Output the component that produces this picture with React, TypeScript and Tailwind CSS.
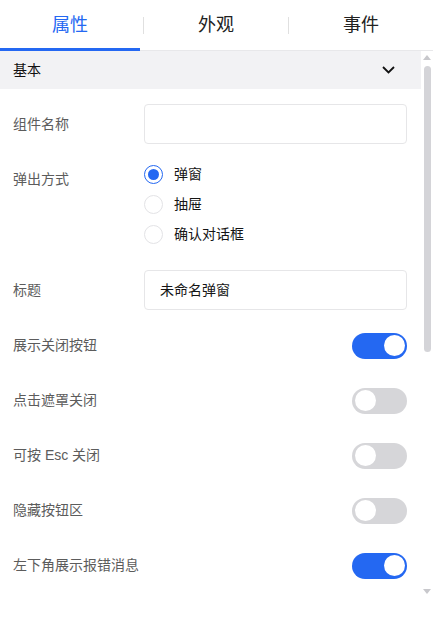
import React from 'react';

const FONT = { fontFamily: '"Liberation Sans", "Noto Sans CJK SC", sans-serif' };

const Toggle: React.FC<{ on: boolean }> = ({ on }) => (
  <div
    className={`w-[55px] h-[26px] rounded-full p-[2.5px] flex ${
      on ? 'bg-[#2468f2] justify-end' : 'bg-[#d6d6d9] justify-start'
    }`}
  >
    <div className="w-[21px] h-[21px] rounded-full bg-white" />
  </div>
);

const Radio: React.FC<{ checked?: boolean; label: string }> = ({ checked, label }) => (
  <div className="flex items-center h-[30px]">
    <div
      className={`w-[19px] h-[19px] rounded-full border flex items-center justify-center ${
        checked ? 'border-[#2468f2]' : 'border-[#e3e3e6]'
      }`}
    >
      {checked && <div className="w-[11px] h-[11px] rounded-full bg-[#2468f2]" />}
    </div>
    <span className="ml-[11px] text-[14px] text-[#151515]">{label}</span>
  </div>
);

const SwitchRow: React.FC<{ label: string; on: boolean }> = ({ label, on }) => (
  <div className="flex items-center justify-between h-[55px]">
    <span className="text-[14px] text-[#5c5c5c]">{label}</span>
    <Toggle on={on} />
  </div>
);

const Divider = () => <div className="w-px h-[17px] bg-[#e0e0e0] shrink-0" />;

export default function App() {
  return (
    <div className="w-[433px] h-[624px] bg-white flex flex-col overflow-hidden" style={FONT}>
      {/* Tabs */}
      <div className="flex items-center h-[51px] border-b border-[#e8e8ea] shrink-0">
        <div className="relative w-[143px] h-full flex items-center justify-center text-[18px] text-[#2468f2] pr-[3px]">
          属性
          <div className="absolute left-0 w-[140px] bottom-[-1px] h-[3px] bg-[#2468f2]" />
        </div>
        <Divider />
        <div className="w-[144px] flex items-center justify-center text-[18px] text-[#222]">外观</div>
        <Divider />
        <div className="flex-1 flex items-center justify-center text-[18px] text-[#222]">事件</div>
      </div>

      <div className="flex flex-1 min-h-0">
        {/* Content */}
        <div className="flex-1 flex flex-col">
          <div className="h-[38px] bg-[#f2f2f4] flex items-center justify-between pl-[13px] pr-[26px]">
            <span className="text-[14px] text-[#111]">基本</span>
            <svg width="13" height="8" viewBox="0 0 13 8" fill="none">
              <path d="M1 1l5.5 5.5L12 1" stroke="#111" strokeWidth="1.8" />
            </svg>
          </div>

          <div className="pl-[13px] pr-[14px] flex flex-col">
            <div className="flex items-center mt-[15px]">
              <span className="w-[131px] text-[14px] text-[#5c5c5c]">组件名称</span>
              <div className="flex-1 h-[40px] rounded-[4px] border border-[#e6e6e8]" />
            </div>

            <div className="flex mt-[15px]">
              <span className="w-[131px] text-[14px] text-[#5c5c5c] leading-[30px] pt-[5px]">弹出方式</span>
              <div className="flex flex-col">
                <Radio checked label="弹窗" />
                <Radio label="抽屉" />
                <Radio label="确认对话框" />
              </div>
            </div>

            <div className="flex items-center mt-[21px]">
              <span className="w-[131px] text-[14px] text-[#5c5c5c]">标题</span>
              <div className="flex-1 h-[40px] rounded-[4px] border border-[#e6e6e8] flex items-center px-[15px] text-[14px] text-[#151515]">
                未命名弹窗
              </div>
            </div>

            <div className="flex flex-col mt-[8px]">
              <SwitchRow label="展示关闭按钮" on />
              <SwitchRow label="点击遮罩关闭" on={false} />
              <SwitchRow label="可按 Esc 关闭" on={false} />
              <SwitchRow label="隐藏按钮区" on={false} />
              <SwitchRow label="左下角展示报错消息" on />
            </div>
          </div>
        </div>

        {/* Scrollbar */}
        <div className="w-[12px] flex flex-col items-center pt-[4px] pb-[30px]">
          <div className="w-0 h-0 border-l-[4px] border-r-[4px] border-b-[5px] border-l-transparent border-r-transparent border-b-[#c8c8cc]" />
          <div className="w-[7px] h-[286px] rounded-full bg-[#d4d4d8] mt-[6px]" />
          <div className="flex-1" />
          <div className="w-0 h-0 border-l-[4px] border-r-[4px] border-t-[5px] border-l-transparent border-r-transparent border-t-[#c8c8cc]" />
        </div>
      </div>
    </div>
  );
}
